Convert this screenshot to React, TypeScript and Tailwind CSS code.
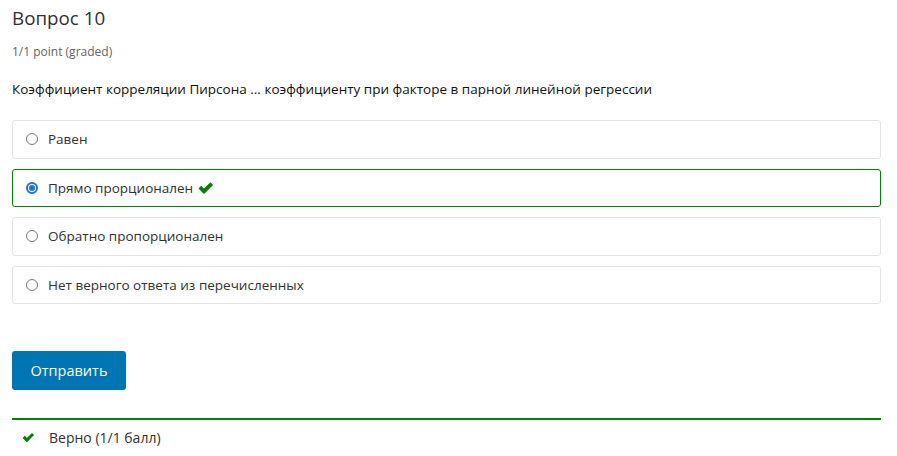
const options = [
  { label: "Равен", selected: false },
  { label: "Прямо прорционален", selected: true },
  { label: "Обратно пропорционален", selected: false },
  { label: "Нет верного ответа из перечисленных", selected: false },
];

function CheckMark({ className }: { className?: string }) {
  return (
    <svg viewBox="0 0 16 14" className={className} fill="#008100">
      <path d="M0.5 7.5 L3.2 4.8 L6 7.6 L12.4 1.2 L15.1 3.9 L6 13 Z" />
    </svg>
  );
}

export default function App() {
  return (
    <div className="bg-white min-h-screen pl-3 pr-4 pt-[6px] font-['Open_Sans',sans-serif] text-[#313131]">
      <h3 className="text-[18.8px] leading-[24px] text-[#313131]">Вопрос 10</h3>
      <div className="mt-[14px] text-[12px] leading-[16px] text-[#646464]">1/1 point (graded)</div>
      <p className="mt-[19px] text-[13.5px] leading-[20px] text-[#111]">
        Коэффициент корреляции Пирсона ... коэффициенту при факторе в парной линейной регрессии
      </p>

      <div className="mt-[21px] flex flex-col gap-[10px]">
        {options.map((o) => (
          <label
            key={o.label}
            className={`flex items-center h-[38.5px] rounded-[3px] border-[1.5px] pl-[13px] ${
              o.selected ? "border-[#008100]" : "border-[#e4e4e4]"
            }`}
          >
            <span
              className={`w-[12px] h-[12px] rounded-full flex items-center justify-center ${
                o.selected ? "border-2 border-[#1a73e8]" : "border border-[#777]"
              }`}
            >
              {o.selected && <span className="w-[6px] h-[6px] rounded-full bg-[#1a73e8]" />}
            </span>
            <span className="ml-[10px] text-[13.5px] text-[#313131]">{o.label}</span>
            {o.selected && <CheckMark className="ml-[5px] w-[16px] h-[14px]" />}
          </label>
        ))}
      </div>

      <button className="mt-[47px] h-[39px] w-[114px] rounded-[3px] bg-[#0075b4] text-white text-[14.5px]">
        Отправить
      </button>

      <div className="mt-[28px] border-t-2 border-[#008100] pt-[7px] flex items-center">
        <CheckMark className="ml-[10px] w-[13px] h-[11px]" />
        <span className="ml-[14px] text-[14px] text-[#313131]">Верно (1/1 балл)</span>
      </div>
    </div>
  );
}
